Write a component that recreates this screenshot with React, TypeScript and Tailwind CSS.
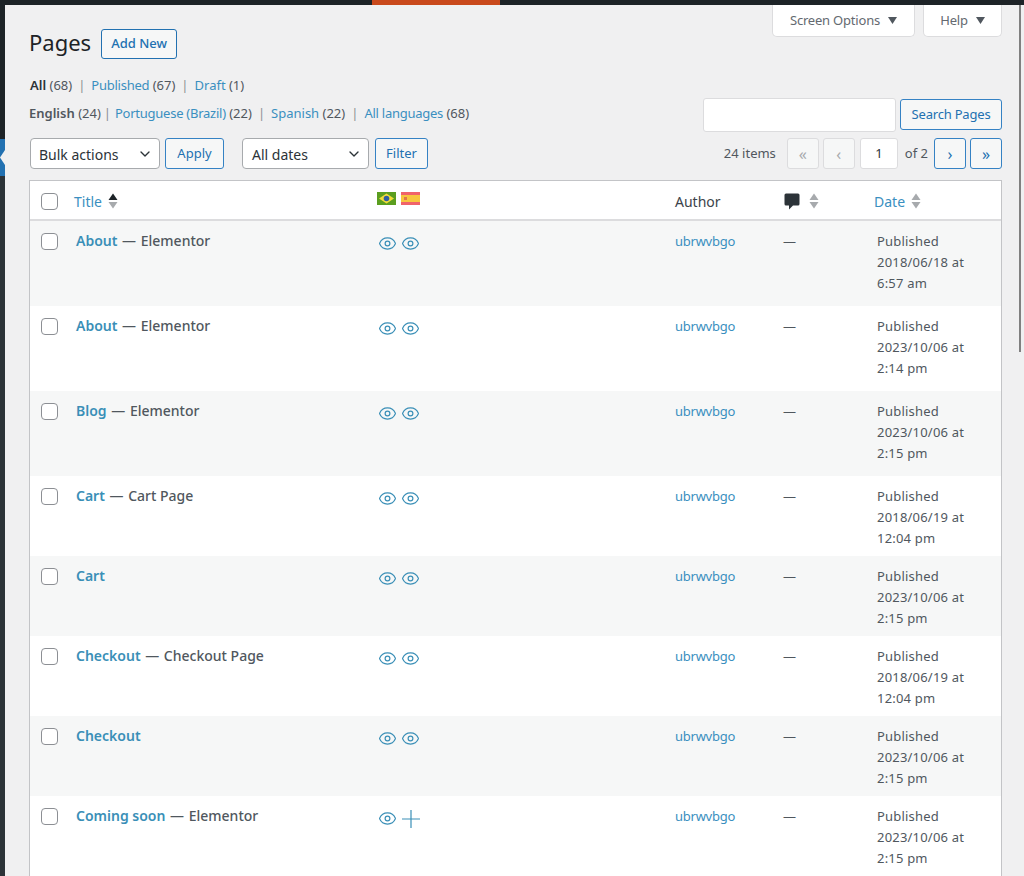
import React from 'react'
import { ChevronDown, Eye } from 'lucide-react'

interface PageRow {
  title: string
  template?: string
  date: string
  time: string
  height: string
  missing?: boolean
}

const rows: PageRow[] = [
  { title: 'About', template: 'Elementor', date: '2018/06/18', time: '6:57 am', height: 'h-[85px]' },
  { title: 'About', template: 'Elementor', date: '2023/10/06', time: '2:14 pm', height: 'h-[85px]' },
  { title: 'Blog', template: 'Elementor', date: '2023/10/06', time: '2:15 pm', height: 'h-[85px]' },
  { title: 'Cart', template: 'Cart Page', date: '2018/06/19', time: '12:04 pm', height: 'h-[80px]' },
  { title: 'Cart', date: '2023/10/06', time: '2:15 pm', height: 'h-[80px]' },
  { title: 'Checkout', template: 'Checkout Page', date: '2018/06/19', time: '12:04 pm', height: 'h-[80px]' },
  { title: 'Checkout', date: '2023/10/06', time: '2:15 pm', height: 'h-[80px]' },
  { title: 'Coming soon', template: 'Elementor', date: '2023/10/06', time: '2:15 pm', height: 'h-[80px]', missing: true },
]

const SortArrows = ({ activeUp }: { activeUp?: boolean }) => (
  <svg width="10" height="16" viewBox="0 0 10 16" className="shrink-0">
    <path d="M5 0.5 L9.5 7 L0.5 7 Z" fill={activeUp ? '#1d2327' : '#a7aaad'} />
    <path d="M0.5 9 L9.5 9 L5 15.5 Z" fill="#a7aaad" />
  </svg>
)

const Checkbox = () => <span className="block w-[17px] h-[17px] rounded-[4px] border border-[#8c8f94] bg-white" />

const BrazilFlag = () => (
  <svg width="19" height="13" viewBox="0 0 19 13">
    <rect width="19" height="13" fill="#5b9e1f" />
    <path d="M9.5 1.5 L17 6.5 L9.5 11.5 L2 6.5 Z" fill="#f3dc3a" />
    <circle cx="9.5" cy="6.5" r="2.8" fill="#2f5f9e" />
  </svg>
)

const SpainFlag = () => (
  <svg width="19" height="13" viewBox="0 0 19 13">
    <rect width="19" height="13" fill="#f0636a" />
    <rect y="3" width="19" height="7" fill="#f7c63e" />
    <rect x="3" y="5" width="3" height="3" fill="#e0764a" />
  </svg>
)

const Plus = () => (
  <svg width="18" height="18" viewBox="0 0 18 18" className="ml-[1px] mt-[1px]">
    <path d="M0 9 H18 M9 0 V18" stroke="#3a8fb7" strokeWidth="1.2" />
  </svg>
)

const PagerButton = ({ label, off }: { label: string; off?: boolean }) => (
  <span
    className={`flex items-center justify-center w-[32px] h-[31px] rounded-[3px] border text-[16px] ${
      off ? 'border-[#dcdcde] bg-[#f6f7f7] text-[#a7aaad]' : 'border-[#3582c4] bg-[#f6f7f7] text-[#2271b1]'
    }`}
  >
    {label}
  </span>
)

const Tab = ({ label, width }: { label: string; width: string }) => (
  <div className={`flex items-center justify-center gap-[8px] h-[32px] ${width} bg-white border border-t-0 border-[#dcdcde] rounded-b-[5px] text-[13px] tracking-[-0.2px] text-[#646970]`}>
    {label}
    <svg width="9" height="7" viewBox="0 0 9 7">
      <path d="M0 0 H9 L4.5 7 Z" fill="#50575e" />
    </svg>
  </div>
)

const Sep = () => <span className="text-[#8c8f94] mx-[6px]">|</span>

const Link = ({ children, tight }: { children: React.ReactNode; tight?: boolean }) => (
  <a className={tight ? 'text-[#3a8fc0] tracking-[-0.25px]' : 'text-[#3a8fc0]'}>{children}</a>
)

export default function App() {
  return (
    <div className="relative w-[1024px] h-[876px] overflow-hidden flex flex-col bg-[#f0f0f1] text-[13px] text-[#50575e] font-['Noto_Sans','Open_Sans',sans-serif]">
      <div className="relative h-[5px] shrink-0 bg-[#1d2327] flex">
        <div className="ml-[372px] w-[128px] bg-[#c9491c]" />
      </div>

      <div className="flex flex-1 min-h-0">
        {/* admin menu sliver */}
        <div className="w-[5px] shrink-0 flex flex-col">
          <div className="h-[134px] bg-[#1d2327]" />
          <svg width="5" height="37" viewBox="0 0 5 37" className="block shrink-0">
            <rect width="5" height="37" fill="#2271b1" />
            <path d="M5 11 L0 18.5 L5 26 Z" fill="#f0f0f1" />
          </svg>
          <div className="flex-1 bg-[#2c3338]" />
        </div>

        <div className="flex-1 min-w-0 pl-[24px] pr-[22px]">
          {/* heading + screen tabs */}
          <div className="flex justify-between h-[53px]">
            <div className="flex items-start">
              <h1 className="mt-[23px] text-[22px] leading-[28px] text-[#1d2327]">Pages</h1>
              <span className="ml-[10px] mt-[24px] flex items-center justify-center w-[76px] h-[30px] rounded-[3px] border border-[#2271b1] bg-[#f6f7f7] text-[13px] font-medium text-[#2271b1]">
                Add New
              </span>
            </div>
            <div className="flex gap-[8px]">
              <Tab label="Screen Options" width="w-[143px]" />
              <Tab label="Help" width="w-[79px]" />
            </div>
          </div>

          <div className="mt-[17px] h-[20px] leading-[20px] pl-[1px]">
            <span className="font-semibold text-[#2c3338]">All</span> (68)
            <Sep />
            <Link tight>Published</Link> (67)
            <Sep />
            <Link>Draft</Link> (1)
          </div>

          <div className="mt-[3px] flex justify-between items-start">
            <div className="mt-[5px] h-[20px] leading-[20px]">
              <span className="font-semibold">English</span> (24)
              <span className="text-[#8c8f94] ml-[3px] mr-[4px]">|</span>
              <Link tight>Portuguese (Brazil)</Link> (22)
              <Sep />
              <Link>Spanish</Link> (22)
              <Sep />
              <Link tight>All languages</Link> (68)
            </div>
            <div className="flex items-start gap-[4px]">
              <span className="block w-[193px] h-[34px] rounded-[3px] border border-[#dcdcde] bg-white" />
              <span className="mt-[1px] flex items-center justify-center w-[102px] h-[31px] rounded-[3px] border border-[#3582c4] bg-[#f6f7f7] text-[#2271b1] tracking-[-0.2px]">
                Search Pages
              </span>
            </div>
          </div>

          {/* toolbar */}
          <div className="mt-[6px] flex items-center h-[31px]">
            <span className="ml-[1px] flex items-center justify-between w-[130px] h-[31px] pl-[8px] pr-[6px] pt-[1px] rounded-[4px] border border-[#a7aaad] bg-white text-[14px] text-[#2c3338]">
              Bulk actions
              <ChevronDown size={16} strokeWidth={2} />
            </span>
            <span className="ml-[5px] flex items-center justify-center w-[59px] h-[31px] rounded-[3px] border border-[#3582c4] bg-[#f6f7f7] text-[#2271b1]">
              Apply
            </span>
            <span className="ml-[18px] flex items-center justify-between w-[127px] h-[31px] pl-[9px] pr-[6px] pt-[1px] rounded-[4px] border border-[#a7aaad] bg-white text-[14px] text-[#2c3338]">
              All dates
              <ChevronDown size={16} strokeWidth={2} />
            </span>
            <span className="ml-[6px] flex items-center justify-center w-[53px] h-[31px] rounded-[3px] border border-[#3582c4] bg-[#f6f7f7] text-[#2271b1]">
              Filter
            </span>
            <div className="ml-auto flex items-center">
              <span className="mr-[11px]">24 items</span>
              <PagerButton label="«" off />
              <span className="ml-[4px]" />
              <PagerButton label="‹" off />
              <span className="ml-[5px] flex items-center justify-center w-[38px] h-[31px] rounded-[3px] border border-[#dcdcde] bg-white text-[#2c3338]">1</span>
              <span className="ml-[7px] mr-[6px]">of 2</span>
              <PagerButton label="›" />
              <span className="ml-[4px]" />
              <PagerButton label="»" />
            </div>
          </div>

          {/* table */}
          <div className="mt-[11px] border border-[#c3c4c7] bg-white">
            <div className="flex items-center h-[40px] pt-[2px] border-b-2 border-[#dcdcde] text-[14px]">
              <div className="w-[44px] pl-[11px] shrink-0"><Checkbox /></div>
              <div className="w-[305px] shrink-0 flex items-center gap-[6px]">
                <Link>Title</Link>
                <SortArrows activeUp />
              </div>
              <div className="w-[296px] shrink-0 flex gap-[5px] pb-[5px] -ml-[2px] mr-[2px]">
                <BrazilFlag />
                <SpainFlag />
              </div>
              <div className="w-[110px] shrink-0 text-[#3c434a]">Author</div>
              <div className="w-[92px] shrink-0 flex items-center gap-[9px] -ml-[1px] mr-[1px]">
                <svg width="16" height="17" viewBox="0 0 16 17">
                  <path d="M2 0.5 H14 Q15.5 0.5 15.5 2 V11 Q15.5 12.5 14 12.5 H9 L5 16.5 V12.5 H2 Q0.5 12.5 0.5 11 V2 Q0.5 0.5 2 0.5 Z" fill="#2c3338" />
                </svg>
                <SortArrows />
              </div>
              <div className="flex items-center gap-[6px] -ml-[3px]">
                <Link>Date</Link>
                <SortArrows />
              </div>
            </div>

            {rows.map((r, i) => (
              <div key={i} className={`flex items-start pt-[10px] ${r.height} ${i % 2 === 0 ? 'bg-[#f6f7f7]' : 'bg-white'}`}>
                <div className="w-[44px] pl-[11px] pt-[2px] shrink-0"><Checkbox /></div>
                <div className="w-[305px] shrink-0 pl-[2px] text-[14px] leading-[20px]">
                  <a className="font-semibold text-[#3a8fb7]">{r.title}</a>
                  {r.template && (
                    <span className="font-medium text-[#50575e]">
                      {' '}
                      <span className="mx-[1px]">—</span> {r.template}
                    </span>
                  )}
                </div>
                <div className="w-[296px] shrink-0 flex gap-[4px] pt-[3px] -ml-[1px] mr-[1px] text-[#3a8fb7]">
                  <Eye size={19} strokeWidth={1.5} />
                  {r.missing ? <Plus /> : <Eye size={19} strokeWidth={1.5} />}
                </div>
                <div className="w-[110px] shrink-0 leading-[20px]"><Link tight>ubrwvbgo</Link></div>
                <div className="w-[92px] shrink-0 leading-[20px] -ml-[2px] mr-[2px]">—</div>
                <div className="leading-[21px] tracking-[0.2px]">
                  Published
                  <br />
                  {r.date} at
                  <br />
                  {r.time}
                </div>
              </div>
            ))}
          </div>
        </div>
      </div>

      {/* overlay scrollbar */}
      <div className="absolute right-[3px] top-[5px] w-[2px] h-[347px] bg-[#808080]" />
    </div>
  )
}
